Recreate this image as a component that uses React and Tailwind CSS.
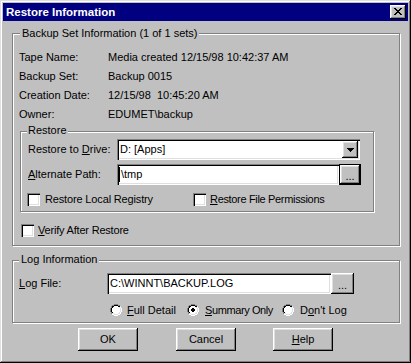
import React from "react";

const sunken =
  "bg-white shadow-[inset_1px_1px_0_#808080,inset_2px_2px_0_#000,inset_-1px_-1px_0_#fff,inset_-2px_-2px_0_#dfdfdf]";
const raised =
  "bg-[#c0c0c0] shadow-[inset_-1px_-1px_0_#000,inset_1px_1px_0_#fff,inset_-2px_-2px_0_#808080,inset_2px_2px_0_#dfdfdf]";

const COLORS = { D: "#808080", B: "#000000", L: "#dfdfdf", W: "#ffffff" };

function PixelMap({ rows, w, h }) {
  const rects = [];
  rows.forEach((row, y) => {
    row.split("").forEach((c, x) => {
      if (COLORS[c]) rects.push(<rect key={`${x}-${y}`} x={x} y={y} width="1" height="1" fill={COLORS[c]} />);
    });
  });
  return (
    <svg width={w} height={h} viewBox={`0 0 ${w} ${h}`} shapeRendering="crispEdges" className="block shrink-0">
      {rects}
    </svg>
  );
}

const RADIO = [
  "....DDDD....",
  "..DDBBBBDD..",
  ".DBBWWWWBBL.",
  ".DBWWWWWWLW.",
  "DBWWWWWWWWLW",
  "DBWWWWWWWWLW",
  "DBWWWWWWWWLW",
  "DBWWWWWWWWLW",
  ".DBWWWWWWLW.",
  ".DLLWWWWLLW.",
  "..WWLLLLWW..",
  "....WWWW....",
];

const RADIO_ON = [
  "....DDDD....",
  "..DDBBBBDD..",
  ".DBBWWWWBBL.",
  ".DBWWWWWWLW.",
  "DBWWWBBWWWLW",
  "DBWWBBBBWWLW",
  "DBWWBBBBWWLW",
  "DBWWWBBWWWLW",
  ".DBWWWWWWLW.",
  ".DLLWWWWLLW.",
  "..WWLLLLWW..",
  "....WWWW....",
];

const CLOSE = [
  "BB....BB",
  ".BB..BB.",
  "..BBBB..",
  "...BB...",
  "..BBBB..",
  ".BB..BB.",
  "BB....BB",
];

const ARROW = ["BBBBBBB", ".BBBBB.", "..BBB..", "...B..."];

function Radio({ on }) {
  return <PixelMap rows={on ? RADIO_ON : RADIO} w={12} h={12} />;
}

function Check() {
  return <div className={`w-[13px] h-[13px] shrink-0 ${sunken}`} />;
}

function Group({ legend, legendClass, className, children }) {
  return (
    <div className={`relative border border-[#808080] shadow-[inset_1px_1px_0_#fff,1px_1px_0_#fff] ${className}`}>
      <span className={`absolute bg-[#c0c0c0] leading-[13px] whitespace-nowrap ${legendClass}`}>{legend}</span>
      {children}
    </div>
  );
}

function Row({ label, value }) {
  return (
    <div className="flex h-[19px] leading-[19px]">
      <span className="w-[89px] shrink-0">{label}</span>
      <span className="whitespace-pre">{value}</span>
    </div>
  );
}

function Btn({ children, className }) {
  return (
    <div className={`h-[23px] w-[60px] flex items-center justify-center ${raised} ${className || ""}`}>{children}</div>
  );
}

export default function App() {
  return (
    <div className="w-[411px] h-[363px] overflow-hidden bg-[#c0c0c0] p-[3px] text-[11px] leading-[13px] text-black font-['Liberation_Sans',Arial,sans-serif] shadow-[inset_-1px_-1px_0_#000,inset_1px_1px_0_#dfdfdf,inset_-2px_-2px_0_#808080,inset_2px_2px_0_#fff]">
      {/* Title bar */}
      <div className="h-[18px] bg-[#000080] flex items-center justify-between pl-[3px] pr-[2px]">
        <span className="text-white font-bold text-[11.5px] leading-[13px]">Restore Information</span>
        <div className={`w-[16px] h-[14px] flex items-start justify-start pl-[4px] pt-[3px] ${raised}`}>
          <PixelMap rows={CLOSE} w={8} h={7} />
        </div>
      </div>

      {/* Backup Set Information */}
      <Group
        legend="Backup Set Information (1 of 1 sets)"
        legendClass="left-[7px] top-[-7px] px-[2px]"
        className="ml-[9px] mt-[12px] w-[388px] h-[213px] pt-[14px] pl-[6px]"
      >
        <Row label="Tape Name:" value="Media created 12/15/98 10:42:37 AM" />
        <Row label="Backup Set:" value="Backup 0015" />
        <Row label="Creation Date:" value="12/15/98  10:45:20 AM" />
        <Row label="Owner:" value="EDUMET\backup" />

        <Group
          legend="Restore"
          legendClass="left-[6px] top-[-8px] px-[1px]"
          className="ml-[1px] mt-[7px] w-[354px] h-[81px] pt-[7px] pl-[7px]"
        >
          <div className="flex items-center h-[21px]">
            <span className="w-[89px] shrink-0">
              Restore to <u>D</u>rive:
            </span>
            <div className={`relative w-[243px] h-[21px] flex items-center pl-[3px] ${sunken}`}>
              <span>D: [Apps]</span>
              <div className={`absolute right-[2px] top-[2px] w-[16px] h-[17px] flex items-center justify-center ${raised}`}>
                <PixelMap rows={ARROW} w={7} h={4} />
              </div>
            </div>
          </div>
          <div className="mt-[4px] flex items-center h-[21px]">
            <span className="w-[89px] shrink-0">
              <u>A</u>lternate Path:
            </span>
            <div className={`w-[222px] h-[21px] flex items-center pl-[2px] ${sunken}`}>
              <span className="w-[1px] h-[15px] bg-black" />
              <span className="ml-[1px]">\tmp</span>
            </div>
            <div className="w-[22px] h-[21px] border border-black">
              <div className={`w-full h-full flex items-end justify-center pb-[3px] leading-[9px] ${raised}`}>...</div>
            </div>
          </div>
          <div className="mt-[8px] -ml-[1px] flex items-center h-[13px]">
            <div className="w-[166px] flex items-center gap-[5px]">
              <Check />
              <span className="tracking-[-0.15px]">Restore Local Registry</span>
            </div>
            <div className="flex items-center gap-[4px]">
              <Check />
              <span className="tracking-[-0.33px]">
                <u>R</u>estore File Permissions
              </span>
            </div>
          </div>
        </Group>

        <div className="mt-[12px] ml-[2px] flex items-center gap-[4px] h-[13px]">
          <Check />
          <span className="tracking-[-0.2px]">
            <u>V</u>erify After Restore
          </span>
        </div>
      </Group>

      {/* Log Information */}
      <Group
        legend="Log Information"
        legendClass="left-[6px] top-[-8px] px-[2px]"
        className="ml-[9px] mt-[14px] w-[388px] h-[63px] pt-[12px] pl-[6px]"
      >
        <div className="flex items-center h-[21px]">
          <span className="w-[88px] shrink-0">
            <u>L</u>og File:
          </span>
          <div className={`w-[224px] h-[21px] flex items-center pl-[3px] ${sunken}`}>
            <span>C:\WINNT\BACKUP.LOG</span>
          </div>
          <div className={`w-[23px] h-[21px] flex items-end justify-center pb-[4px] leading-[9px] ${raised}`}>...</div>
        </div>
        <div className="mt-[10px] pl-[91px] flex items-center h-[12px]">
          <div className="w-[77px] flex items-center gap-[5px]">
            <Radio />
            <span>
              <u>F</u>ull Detail
            </span>
          </div>
          <div className="w-[95px] flex items-center gap-[6px]">
            <Radio on />
            <span className="tracking-[-0.4px]">
              <u>S</u>ummary Only
            </span>
          </div>
          <div className="flex items-center gap-[6px]">
            <Radio />
            <span>
              D<u>o</u>n't Log
            </span>
          </div>
        </div>
      </Group>

      {/* Buttons */}
      <div className="mt-[5px] ml-[75px] flex">
        <Btn>OK</Btn>
        <Btn className="ml-[38px]">Cancel</Btn>
        <Btn className="ml-[37px]">
          <span>
            <u>H</u>elp
          </span>
        </Btn>
      </div>
    </div>
  );
}
